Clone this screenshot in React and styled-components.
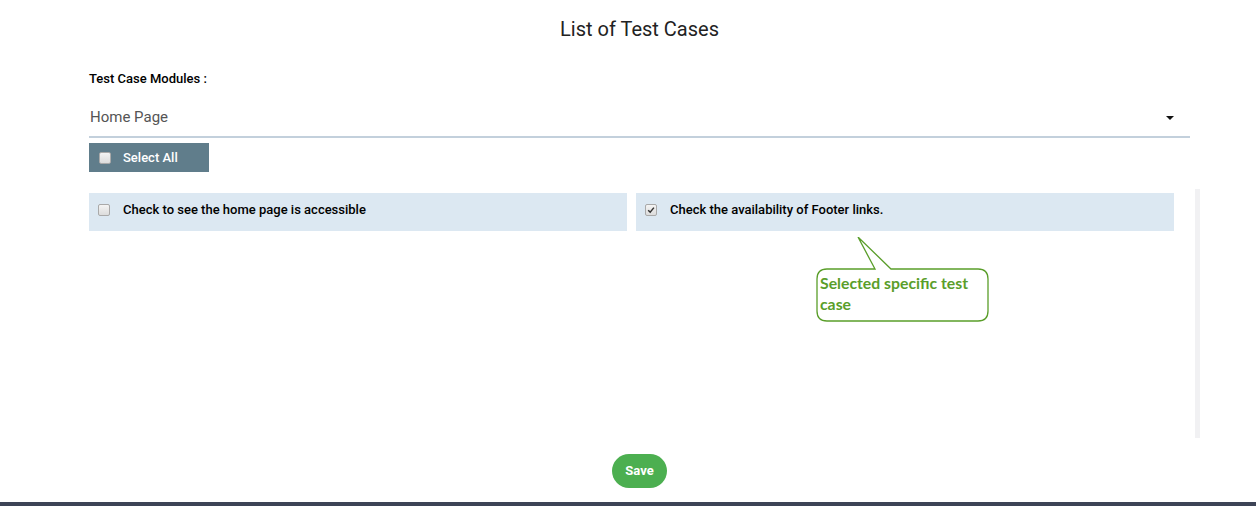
import styled, { createGlobalStyle } from "styled-components";

const GlobalStyle = createGlobalStyle`
  html, body {
    margin: 0;
    padding: 0;
    background: #ffffff;
    font-family: Roboto, "Liberation Sans", sans-serif;
  }
`;

const Page = styled.div`
  position: relative;
  height: 506px;
  display: flex;
  flex-direction: column;
  overflow: hidden;
`;

const Content = styled.div`
  width: 1101px;
  margin-left: 89px;
  display: flex;
  flex-direction: column;
  flex: 1;
`;

const Title = styled.h1`
  margin: 17px 0 0;
  font-size: 20px;
  font-weight: 400;
  line-height: 24px;
  color: #222;
  text-align: center;
`;

const Label = styled.div`
  margin-top: 30px;
  font-size: 13px;
  font-weight: 500;
  line-height: 15px;
  color: #000;
`;

const Select = styled.div`
  margin-top: 18px;
  height: 34px;
  display: flex;
  align-items: center;
  justify-content: space-between;
  padding: 0 16px 6px 1px;
  box-sizing: border-box;
  border-bottom: 2px solid #c3d0dc;
  font-size: 15px;
  color: #555;
`;

const Caret = styled.span`
  width: 0;
  height: 0;
  border-left: 4px solid transparent;
  border-right: 4px solid transparent;
  border-top: 4px solid #111;
  margin-top: 1px;
`;

const SelectAllButton = styled.div`
  margin-top: 5px;
  width: 120px;
  height: 29px;
  background: #607d8b;
  display: flex;
  align-items: center;
  gap: 12px;
  padding-left: 10px;
  box-sizing: border-box;
  color: #fff;
  font-size: 13px;
  font-weight: 500;
`;

const Box = styled.span`
  width: 10px;
  height: 10px;
  border: 1px solid #a9a9a9;
  border-radius: 2px;
  background: linear-gradient(#f4f4f4, #dcdcdc);
  display: inline-flex;
  align-items: center;
  justify-content: center;
  flex-shrink: 0;
`;

const ListArea = styled.div`
  position: relative;
  margin-top: 17px;
  margin-right: -10px;
  height: 249px;
  display: flex;
  justify-content: space-between;
`;

const CaseGrid = styled.div`
  width: 1085px;
  padding-top: 4px;
  display: grid;
  grid-template-columns: 1fr 1fr;
  column-gap: 9px;
  align-content: start;
`;

const CaseItem = styled.div`
  height: 38px;
  box-sizing: border-box;
  background: #dce8f2;
  display: flex;
  align-items: center;
  gap: 13px;
  padding: 0 0 5px 9px;
  font-size: 13px;
  font-weight: 500;
  color: #000;
`;

const ScrollTrack = styled.div`
  width: 5px;
  height: 100%;
  background: #f1f1f3;
`;

const Callout = styled.div`
  position: absolute;
  left: 727px;
  top: 48px;
  width: 176px;
  height: 86px;
`;

const CalloutText = styled.div`
  position: absolute;
  left: 4px;
  top: 35px;
  width: 168px;
  font-family: Lato, "Open Sans", sans-serif;
  font-size: 15.8px;
  font-weight: 700;
  line-height: 21px;
  color: #5a9e2a;
`;

const Footer = styled.div`
  margin-top: 16px;
  display: flex;
  justify-content: center;
`;

const SaveButton = styled.button`
  width: 55px;
  height: 34px;
  border: none;
  border-radius: 17px;
  background: #4caf50;
  color: #fff;
  font-family: Roboto, "Liberation Sans", sans-serif;
  font-size: 13px;
  font-weight: 700;
  padding: 0 0 2px;
`;

const BottomBar = styled.div`
  height: 4px;
  background: #3d4456;
`;

function CheckBox({ checked }) {
  return (
    <Box>
      {checked && (
        <svg width="8" height="8" viewBox="0 0 8 8">
          <path d="M1.2 4.2 L3.2 6.2 L6.9 1.6" fill="none" stroke="#333" strokeWidth="1.5" />
        </svg>
      )}
    </Box>
  );
}

const testCases = [
  { id: 1, text: "Check to see the home page is accessible", checked: false },
  { id: 2, text: "Check the availability of Footer links.", checked: true },
];

function App() {
  return (
    <Page>
      <GlobalStyle />
      <Content>
        <Title>List of Test Cases</Title>
        <Label>Test Case Modules :</Label>
        <Select>
          <span>Home Page</span>
          <Caret />
        </Select>
        <SelectAllButton>
          <CheckBox />
          Select All
        </SelectAllButton>
        <ListArea>
          <CaseGrid>
            {testCases.map((tc) => (
              <CaseItem key={tc.id}>
                <CheckBox checked={tc.checked} />
                {tc.text}
              </CaseItem>
            ))}
          </CaseGrid>
          <ScrollTrack />
          <Callout>
            <svg width="176" height="86" viewBox="0 0 176 86">
              <path
                d="M 11 32 L 59 32 L 42 0 L 75 32 L 162 32 Q 172 32 172 42 L 172 74 Q 172 84 162 84 L 11 84 Q 1 84 1 74 L 1 42 Q 1 32 11 32 Z"
                fill="#fff"
                stroke="#5a9e2a"
                strokeWidth="1.3"
              />
            </svg>
            <CalloutText>Selected specific test case</CalloutText>
          </Callout>
        </ListArea>
        <Footer>
          <SaveButton>Save</SaveButton>
        </Footer>
      </Content>
      <BottomBar />
    </Page>
  );
}

export default App;
